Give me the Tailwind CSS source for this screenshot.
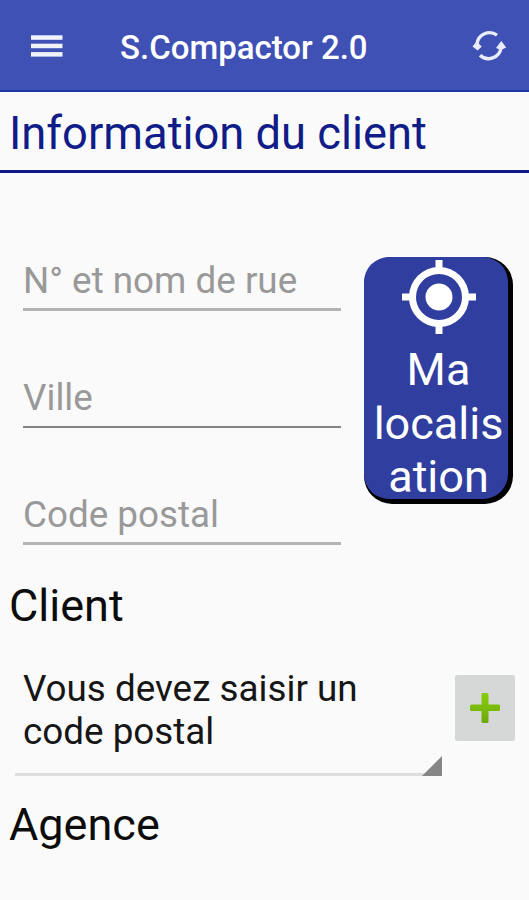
<!DOCTYPE html>
<html lang="fr">
<head>
    <meta charset="UTF-8">
    <meta name="viewport" content="width=device-width, initial-scale=1.0">
    <title>S.Compactor 2.0</title>
    <script src="https://cdn.jsdelivr.net/npm/@tailwindcss/browser@4"></script>
</head>
<body class="bg-[#fafafa] font-['Roboto',sans-serif] w-[529px] h-[900px] overflow-hidden">
    <!-- App bar -->
    <header class="h-[92px] bg-[#3f51b5] border-b-2 border-[#1a38a4] flex items-center text-white">
        <button class="ml-[31px] mt-px" aria-label="Menu">
            <svg class="w-8 h-6 block" viewBox="0 0 32 24" fill="#f1f3fc">
                <rect x="0" y="1.3" width="31.5" height="4.5"/>
                <rect x="0" y="9.7" width="31.5" height="4.5"/>
                <rect x="0" y="18.1" width="31.5" height="4.5"/>
            </svg>
        </button>
        <h1 class="ml-[57px] mt-1.5 text-[33px] leading-10 font-medium whitespace-nowrap">S.Compactor 2.0</h1>
        <button class="ml-auto mr-[22px] mt-0.5" aria-label="Actualiser">
            <svg class="w-9 h-8 block" viewBox="0 0 36 32" fill="none" stroke="#e9edfb" stroke-width="3.4">
                <path d="M26 5.200A12.600 12.600 0 0 0 6 14"/>
                <path d="M9 25.300A12.600 12.600 0 0 0 30 18"/>
                <path d="M5.500 11.500L10.800 16.500L6.600 20.500L1.500 16.500Z" fill="#e9edfb" stroke="none"/>
                <path d="M30.300 11L35.200 17.500L30 20L25 18Z" fill="#e9edfb" stroke="none"/>
            </svg>
        </button>
    </header>

    <!-- Section title -->
    <div class="h-[81px] border-b-3 border-[#101a86] pl-[9px] pt-[15px]">
        <h2 class="text-[45.3px] leading-[53px] text-[#101c88] whitespace-nowrap">Information du client</h2>
    </div>

    <main>
        <!-- Address -->
        <div class="flex items-start h-[372px] pt-[84px] pl-[23px]">
            <form class="w-[318px] flex flex-col">
                <input type="text" placeholder="N° et nom de rue" class="h-[54px] w-full pb-1 border-b-3 border-[#b3b3b3] text-[36.8px] placeholder:text-[#999999] outline-none">
                <input type="text" placeholder="Ville" class="mt-[63px] h-[54px] w-full pb-1 border-b-2 border-[#858585] text-[36.8px] placeholder:text-[#999999] outline-none">
                <input type="text" placeholder="Code postal" class="mt-[62px] h-[55px] w-full pb-[3px] border-b-3 border-[#b3b3b3] text-[36.8px] placeholder:text-[#999999] outline-none">
            </form>
            <button class="ml-[23px] w-[149px] h-[247px] rounded-[28px] bg-black pr-[5px] pb-[5px]">
                <span class="w-full h-full rounded-[25px] bg-[#303f9f] flex flex-col items-center text-white pl-[5px]">
                    <svg class="w-[74px] h-[74px] mt-[3px] shrink-0" viewBox="0 0 74 74" fill="none" stroke="#ffffff">
                        <circle cx="37" cy="37" r="26.5" stroke-width="7"/>
                        <circle cx="37" cy="37" r="13.5" fill="#ffffff" stroke="none"/>
                        <path d="M37 0V11M37 63V74M0 37H11M63 37H74" stroke-width="7"/>
                    </svg>
                    <span class="mt-[9px] text-[45px] leading-[53.5px] text-center">Ma<br>localis<br>ation</span>
                </span>
            </button>
        </div>

        <!-- Client -->
        <h3 class="mt-[34px] pl-[9px] text-[45px] leading-[53px] text-[#0c0c0c]">Client</h3>
        <div class="flex pl-[15px]">
            <div class="w-[427px] h-[124px] mt-[20px] border-b-3 border-[#dedede] relative">
                <p class="pl-2 pt-[15px] text-[36.8px] leading-[43px] text-[#161616]">Vous devez saisir un<br>code postal</p>
                <svg class="absolute right-0 -bottom-[3px] w-5 h-5" viewBox="0 0 20 20">
                    <path d="M20 0V20H0Z" fill="#868686"/>
                </svg>
            </div>
            <button class="ml-[13px] mt-[43px] w-[60px] h-[66px] rounded-xs bg-[#d6d8d7] flex items-center justify-center" aria-label="Ajouter">
                <svg class="w-[30px] h-[30px]" viewBox="0 0 30 30">
                    <defs>
                        <linearGradient id="plus" x1="0" y1="0" x2="0" y2="1">
                            <stop offset="0" stop-color="#86cf0a"/>
                            <stop offset="1" stop-color="#6fa80c"/>
                        </linearGradient>
                    </defs>
                    <path d="M13 0h4q1.500 0 1.500 1.500v10h10q1.500 0 1.500 1.500v3.500q0 1.500-1.500 1.500h-10v10.500q0 1.500-1.500 1.500h-4q-1.500 0-1.500-1.500v-10.500h-10q-1.500 0-1.500-1.500v-3.500q0-1.500 1.500-1.500h10v-10q0-1.500 1.500-1.500z" fill="url(#plus)"/>
                </svg>
            </button>
        </div>

        <!-- Agence -->
        <h3 class="mt-[22px] pl-[9px] text-[45px] leading-[53px] text-[#0c0c0c]">Agence</h3>
    </main>
</body>
</html>
